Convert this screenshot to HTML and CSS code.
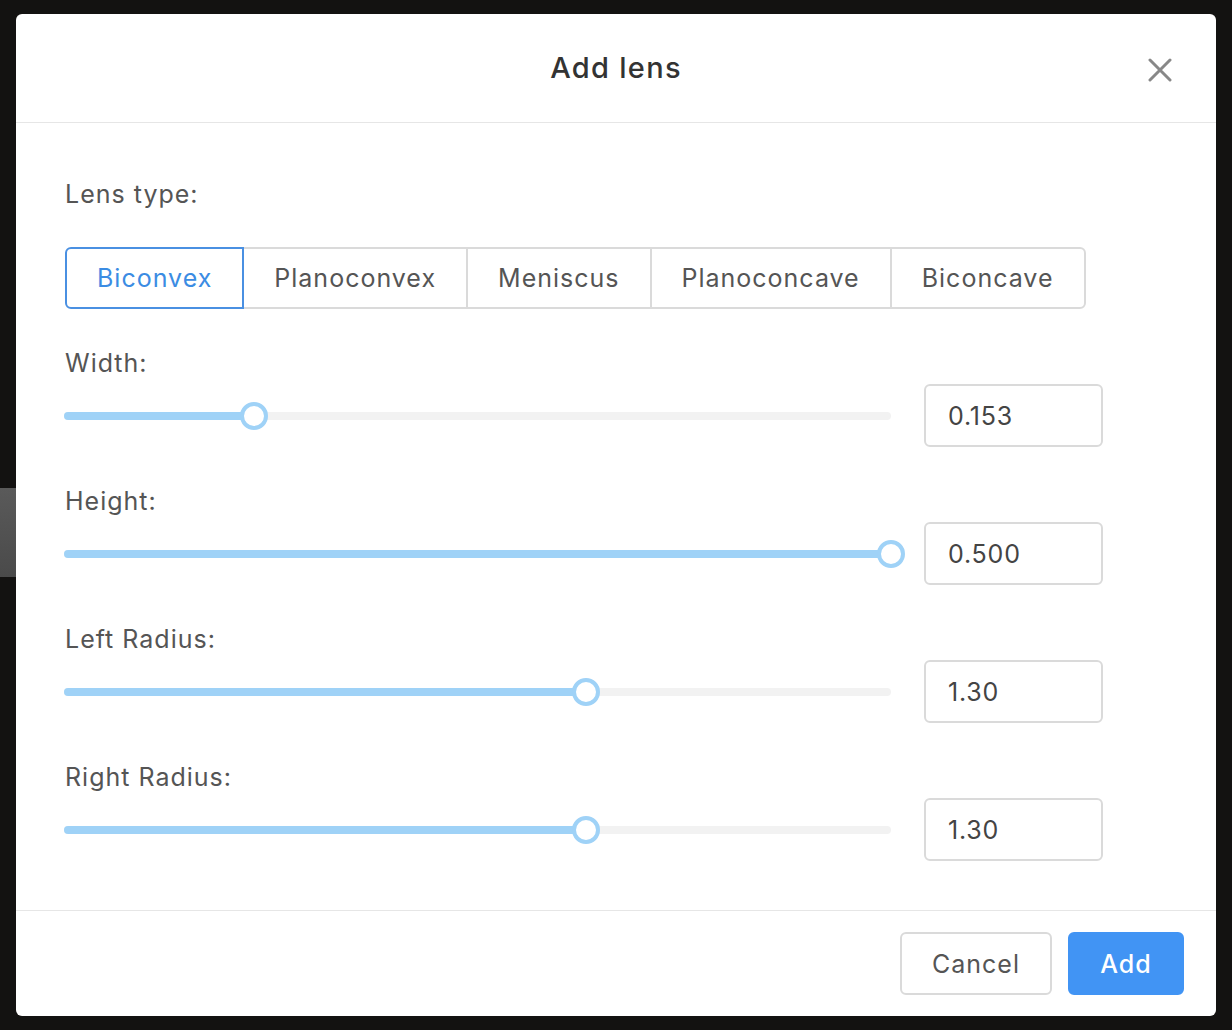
FILE: index.html
```html
<!DOCTYPE html>
<html>
<head>
<meta charset="utf-8">
<link rel="stylesheet" href="styles.css">
</head>
<body>
<div class="backdrop-patch"></div>
<div class="modal">
  <header class="modal-header">
    <h1 class="modal-title">Add lens</h1>
    <button class="close-btn" aria-label="Close">
      <svg width="24" height="24" viewBox="0 0 24 24"><path d="M2 2 L22 22 M22 2 L2 22" stroke="#888" stroke-width="3" stroke-linecap="round" fill="none"/></svg>
    </button>
  </header>
  <section class="modal-body">
    <div class="field-label first">Lens type:</div>
    <div class="segmented">
      <button class="seg active">Biconvex</button>
      <button class="seg">Planoconvex</button>
      <button class="seg">Meniscus</button>
      <button class="seg">Planoconcave</button>
      <button class="seg last">Biconcave</button>
    </div>

    <div class="row">
      <div class="field-label">Width:</div>
      <div class="control">
        <div class="slider">
          <div class="track"></div>
          <div class="fill" style="width: 23%"></div>
          <div class="handle" style="left: 23%"></div>
        </div>
        <div class="num-input">0.153</div>
      </div>
    </div>

    <div class="row">
      <div class="field-label">Height:</div>
      <div class="control">
        <div class="slider">
          <div class="track"></div>
          <div class="fill" style="width: 100%"></div>
          <div class="handle" style="left: 100%"></div>
        </div>
        <div class="num-input">0.500</div>
      </div>
    </div>

    <div class="row">
      <div class="field-label">Left Radius:</div>
      <div class="control">
        <div class="slider">
          <div class="track"></div>
          <div class="fill" style="width: 63.1%"></div>
          <div class="handle" style="left: 63.1%"></div>
        </div>
        <div class="num-input">1.30</div>
      </div>
    </div>

    <div class="row">
      <div class="field-label">Right Radius:</div>
      <div class="control">
        <div class="slider">
          <div class="track"></div>
          <div class="fill" style="width: 63.1%"></div>
          <div class="handle" style="left: 63.1%"></div>
        </div>
        <div class="num-input">1.30</div>
      </div>
    </div>
  </section>
  <footer class="modal-footer">
    <button class="btn btn-default">Cancel</button>
    <button class="btn btn-primary">Add</button>
  </footer>
</div>
</body>
</html>
```

FILE: styles.css
```css
* { box-sizing: border-box; }

html, body {
  margin: 0;
  padding: 0;
}

body {
  width: 1232px;
  height: 1030px;
  background: #131211;
  font-family: "Inter", "Noto Sans", "Liberation Sans", sans-serif;
  position: relative;
  overflow: hidden;
  padding: 14px 16px 0 16px;
}

.backdrop-patch {
  position: absolute;
  left: 0;
  top: 488px;
  width: 20px;
  height: 89px;
  background: linear-gradient(#5a5a5a, #4a4a4a);
}

.modal {
  position: relative;
  width: 1200px;
  height: 1002px;
  background: #fff;
  border-radius: 6px;
  display: flex;
  flex-direction: column;
  overflow: hidden;
}

.modal-header {
  flex: 0 0 109px;
  border-bottom: 1px solid #e6e6e6;
  display: flex;
  align-items: center;
  justify-content: center;
  position: relative;
}

.modal-title {
  margin: 0;
  font-size: 29px;
  font-weight: 500;
  color: #333;
  letter-spacing: 1.3px;
  padding-bottom: 1px;
}

.close-btn {
  position: absolute;
  right: 44px;
  top: 44px;
  width: 24px;
  height: 24px;
  padding: 0;
  border: none;
  background: none;
  display: flex;
}

.modal-body {
  flex: 0 0 787px;
  padding: 53px 113px 48px 48px;
}

.field-label {
  font-size: 25px;
  line-height: 36px;
  color: #555;
  padding-left: 1px;
  letter-spacing: 1px;
}

.field-label.first {
  margin-bottom: 35px;
}

.segmented {
  display: flex;
  height: 62px;
  margin-bottom: 1px;
}

.seg {
  font-family: inherit;
  font-size: 25px;
  letter-spacing: 1px;
  color: #555;
  background: #fff;
  border: 2px solid #dadada;
  height: 62px;
  padding: 0 30px;
  margin-left: -2px;
  border-radius: 0;
}

.seg:first-child {
  margin-left: 1px;
  border-radius: 6px 0 0 6px;
}

.seg.last {
  border-radius: 0 6px 6px 0;
}

.seg.active {
  color: #3b8ce3;
  border-color: #4a90e2;
  position: relative;
  z-index: 1;
}

.row {
  margin-top: 36px;
}

.control {
  display: flex;
  align-items: center;
  gap: 33px;
  margin-top: 3px;
}

.slider {
  flex: 1;
  position: relative;
  height: 28px;
}

.track {
  position: absolute;
  left: 0;
  right: 0;
  top: 10px;
  height: 8px;
  border-radius: 4px;
  background: #f2f2f2;
}

.fill {
  position: absolute;
  left: 0;
  top: 10px;
  height: 8px;
  border-radius: 4px;
  background: #9fd2f7;
}

.handle {
  position: absolute;
  top: 0;
  width: 28px;
  height: 28px;
  margin-left: -14px;
  border-radius: 50%;
  background: #fff;
  border: 4px solid #9fd2f7;
}

.num-input {
  flex: 0 0 179px;
  height: 63px;
  border: 2px solid #dadada;
  border-radius: 6px;
  font-size: 25px;
  letter-spacing: 0.8px;
  color: #444;
  display: flex;
  align-items: center;
  padding-left: 22px;
}

.modal-footer {
  flex: 0 0 106px;
  border-top: 1px solid #e6e6e6;
  display: flex;
  justify-content: flex-end;
  align-items: center;
  gap: 16px;
  padding: 0 32px 0 0;
}

.btn {
  font-family: inherit;
  font-size: 25px;
  letter-spacing: 1px;
  height: 63px;
  border-radius: 6px;
  padding: 0;
}

.btn-default {
  width: 152px;
  background: #fff;
  border: 2px solid #dadada;
  color: #555;
}

.btn-primary {
  width: 116px;
  background: #4194f4;
  border: 2px solid #4194f4;
  color: #fff;
  font-weight: 500;
}
```
